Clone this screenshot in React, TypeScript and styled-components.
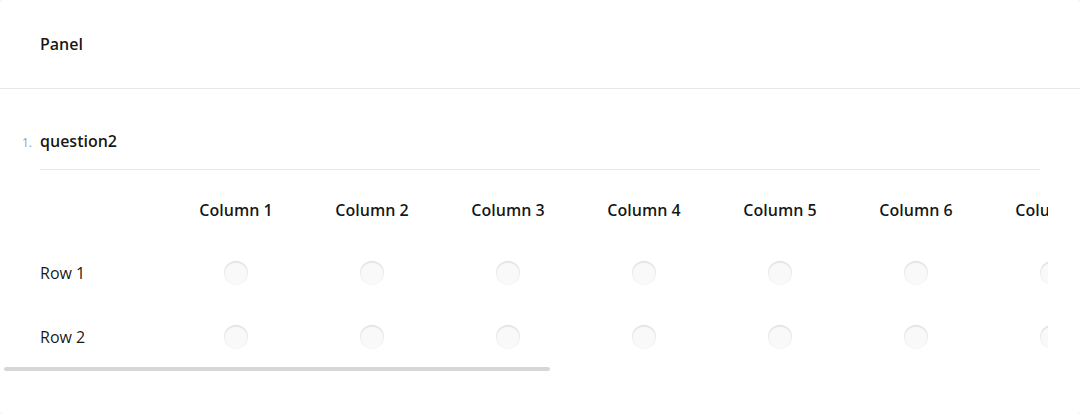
import styled, { createGlobalStyle } from 'styled-components'

const GlobalStyle = createGlobalStyle`
html, body {
  margin: 0;
  padding: 0;
  background: #f3f3f3;
}
body {
  font-family: "Open Sans", "Liberation Sans", sans-serif;
  color: rgba(0, 0, 0, 0.91);
}
`

const VIEWPORT = 1048
const CONTENT = 1996
const TRACK = VIEWPORT - 8

const Card = styled.div`
box-sizing: border-box;
width: 1080px;
height: 414px;
background: #ffffff;
border-radius: 4px;
overflow: hidden;
`

const PanelHeader = styled.div`
padding: 32px 40px;
border-bottom: 1px solid rgba(0, 0, 0, 0.09);
font-size: 16px;
line-height: 24px;
font-weight: 600;
`

const PanelBody = styled.div`
padding: 40px 40px 0;
`

const QuestionHeader = styled.div`
display: flex;
align-items: flex-start;
padding-bottom: 16px;
border-bottom: 1px solid rgba(0, 0, 0, 0.09);
`

const QuestionNumber = styled.span`
flex: none;
width: 18px;
margin: 4px 0 0 -18px;
font-size: 12px;
line-height: 20px;
color: rgba(0, 0, 0, 0.45);
`

const QuestionTitle = styled.span`
font-size: 16px;
line-height: 24px;
font-weight: 600;
`

const MatrixViewport = styled.div`
width: ${VIEWPORT}px;
margin-left: -40px;
overflow: hidden;
`

const TableFrame = styled.div`
width: ${CONTENT}px;
`

const Table = styled.table`
width: 1936px;
border-collapse: collapse;
border-spacing: 0;
table-layout: fixed;
font-size: 16px;
line-height: 24px;

tbody tr:last-child td {
  padding-bottom: 14px;
}
`

const CornerCell = styled.th`
width: 128px;
padding: 0 0 0 40px;
`

const ColumnHeader = styled.th`
width: 136px;
padding: 28px 0 19px;
font-weight: 600;
text-align: center;
white-space: nowrap;
`

const RowLabel = styled.td`
padding: 20px 0 20px 40px;
vertical-align: top;
white-space: nowrap;
`

const Cell = styled.td`
padding: 20px 0;
vertical-align: top;
text-align: center;
`

const Radio = styled.span`
display: inline-block;
width: 24px;
height: 24px;
border-radius: 50%;
background: #f9f9f9;
box-shadow: inset 0 1px 2px rgba(0, 0, 0, 0.15);
vertical-align: top;
`

const ScrollTrack = styled.div`
width: ${TRACK}px;
margin-left: -40px;
padding: 4px;
`

const ScrollThumb = styled.div`
height: 4px;
border-radius: 32px;
background: rgba(0, 0, 0, 0.16);
`

const columns = Array.from({ length: 13 }, (_, i) => `Column ${i + 1}`)
const rows = ['Row 1', 'Row 2']

export default function App() {
  const thumbWidth = Math.round((TRACK * VIEWPORT) / CONTENT)
  return (
    <>
      <GlobalStyle />
      <Card>
        <PanelHeader>Panel</PanelHeader>
        <PanelBody>
          <QuestionHeader>
            <QuestionNumber>1.</QuestionNumber>
            <QuestionTitle>question2</QuestionTitle>
          </QuestionHeader>
          <MatrixViewport>
            <TableFrame>
              <Table>
                <thead>
                  <tr>
                    <CornerCell />
                    {columns.map((c) => (
                      <ColumnHeader key={c}>{c}</ColumnHeader>
                    ))}
                  </tr>
                </thead>
                <tbody>
                  {rows.map((r) => (
                    <tr key={r}>
                      <RowLabel>{r}</RowLabel>
                      {columns.map((c) => (
                        <Cell key={c}>
                          <Radio />
                        </Cell>
                      ))}
                    </tr>
                  ))}
                </tbody>
              </Table>
            </TableFrame>
          </MatrixViewport>
          <ScrollTrack>
            <ScrollThumb style={{ width: thumbWidth }} />
          </ScrollTrack>
        </PanelBody>
      </Card>
    </>
  )
}
